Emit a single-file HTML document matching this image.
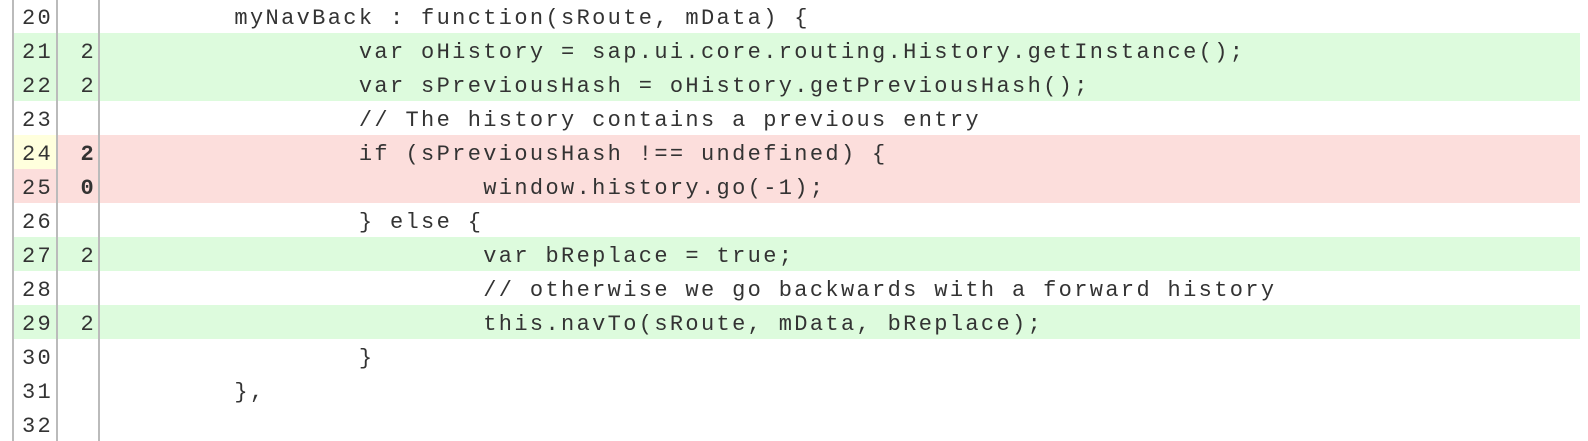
<!DOCTYPE html>
<html><head><style>
html,body{margin:0;padding:0;background:#fff;width:1588px;height:420px;overflow:hidden}
.t{position:absolute;left:12px;top:-1px;width:1568px}
.r{height:34px;display:flex;font-family:"Liberation Mono",monospace;font-size:22px;letter-spacing:2.35px;color:#333;line-height:40px;overflow:hidden}
.n{width:42px;border-left:2px solid #bbb;border-right:2px solid #bbb;box-sizing:content-box;text-align:left}
.n span{padding-left:8px}
.c{border-right:2px solid #bbb;text-align:right;padding-right:2px;box-sizing:border-box;width:42px}
.s{flex:1;white-space:pre;padding-left:10px}
.g{background:#ddfbdd}
.p{background:#fcdedc}
.y{background:#ffffdd}
b{font-weight:bold}
</style></head><body>
<div class="t">
<div class="r"><div class="n"><span>20</span></div><div class="c"></div><div class="s">        myNavBack : function(sRoute, mData) {</div></div>
<div class="r"><div class="n g"><span>21</span></div><div class="c g">2</div><div class="s g">                var oHistory = sap.ui.core.routing.History.getInstance();</div></div>
<div class="r"><div class="n g"><span>22</span></div><div class="c g">2</div><div class="s g">                var sPreviousHash = oHistory.getPreviousHash();</div></div>
<div class="r"><div class="n"><span>23</span></div><div class="c"></div><div class="s">                // The history contains a previous entry</div></div>
<div class="r"><div class="n y"><span>24</span></div><div class="c p"><b>2</b></div><div class="s p">                if (sPreviousHash !== undefined) {</div></div>
<div class="r"><div class="n p"><span>25</span></div><div class="c p"><b>0</b></div><div class="s p">                        window.history.go(-1);</div></div>
<div class="r"><div class="n"><span>26</span></div><div class="c"></div><div class="s">                } else {</div></div>
<div class="r"><div class="n g"><span>27</span></div><div class="c g">2</div><div class="s g">                        var bReplace = true;</div></div>
<div class="r"><div class="n"><span>28</span></div><div class="c"></div><div class="s">                        // otherwise we go backwards with a forward history</div></div>
<div class="r"><div class="n g"><span>29</span></div><div class="c g">2</div><div class="s g">                        this.navTo(sRoute, mData, bReplace);</div></div>
<div class="r"><div class="n"><span>30</span></div><div class="c"></div><div class="s">                }</div></div>
<div class="r"><div class="n"><span>31</span></div><div class="c"></div><div class="s">        },</div></div>
<div class="r"><div class="n"><span>32</span></div><div class="c"></div><div class="s"></div></div>
</div>
</body></html>
